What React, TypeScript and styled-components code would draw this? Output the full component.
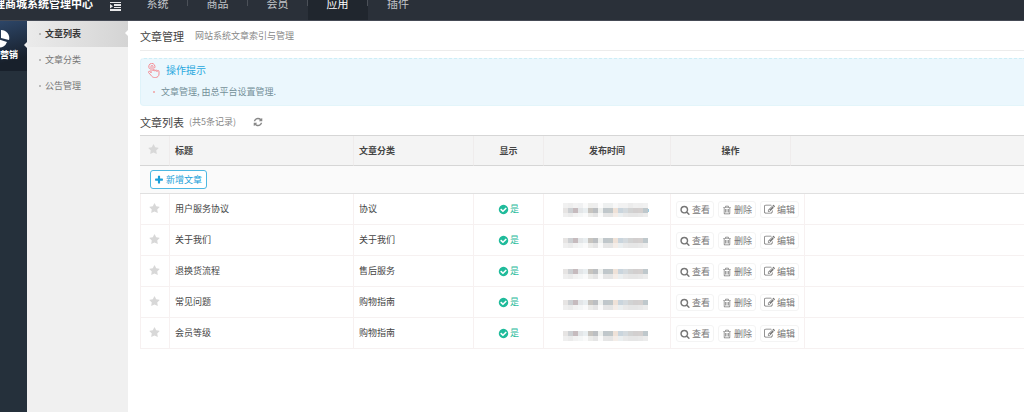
import React from "react";
import styled, { createGlobalStyle } from "styled-components";

const GlobalStyle = createGlobalStyle`
  * { box-sizing: border-box; }
  body {
    margin: 0;
    background: #fff;
    color: #444;
    font: 9px/14px "Noto Sans CJK SC", sans-serif;
  }
  button { font: inherit; cursor: pointer; }
  a { color: inherit; text-decoration: none; }
  h1, h2, h3, p, ul { margin: 0; padding: 0; font-weight: 400; list-style: none; }
`;

const paths = {
  search:
    "M1216 832q0-185-131.5-316.5t-316.5-131.5-316.5 131.5-131.5 316.5 131.5 316.5 316.5 131.5 316.5-131.5 131.5-316.5zm512 832q0 52-38 90t-90 38q-54 0-90-38l-343-342q-179 124-399 124-143 0-273.5-55.5t-225-150-150-225-55.5-273.5 55.5-273.5 150-225 225-150 273.5-55.5 273.5 55.5 225 150 150 225 55.5 273.5q0 220-124 399l343 343q37 37 37 90z",
  trash:
    "M704 736v576q0 14-9 23t-23 9h-64q-14 0-23-9t-9-23v-576q0-14 9-23t23-9h64q14 0 23 9t9 23zm256 0v576q0 14-9 23t-23 9h-64q-14 0-23-9t-9-23v-576q0-14 9-23t23-9h64q14 0 23 9t9 23zm256 0v576q0 14-9 23t-23 9h-64q-14 0-23-9t-9-23v-576q0-14 9-23t23-9h64q14 0 23 9t9 23zm128 724v-948h-896v948q0 22 7 40.5t14.5 27 10.5 8.5h832q3 0 10.5-8.5t14.5-27 7-40.5zm-672-1076h448l-48-117q-7-9-17-11h-317q-10 2-17 11zm928 32v64q0 14-9 23t-23 9h-96v948q0 83-47 143.5t-113 60.5h-832q-66 0-113-58.5t-47-141.5v-952h-96q-14 0-23-9t-9-23v-64q0-14 9-23t23-9h309l70-167q15-37 54-63t79-26h320q40 0 79 26t54 63l70 167h309q14 0 23 9t9 23z",
  edit:
    "M888 1184l116-116-152-152-116 116v56h96v96h56zm440-720q-16-16-33 1l-350 350q-17 17-1 33t33-1l350-350q17-17 1-33zm80 594v190q0 119-84.5 203.5t-203.5 84.5h-832q-119 0-203.5-84.5t-84.5-203.5v-832q0-119 84.5-203.5t203.5-84.5h832q63 0 117 25 15 7 18 23 3 17-9 29l-49 49q-14 14-32 8-23-6-45-6h-832q-66 0-113 47t-47 113v832q0 66 47 113t113 47h832q66 0 113-47t47-113v-126q0-13 9-22l64-64q15-15 35-7t20 29zm-96-738l288 288-672 672h-288v-288zm444 132l-92 92-288-288 92-92q28-28 68-28t68 28l152 152q28 28 28 68t-28 68z",
  check:
    "M1412 734q0-28-18-46l-91-90q-19-19-45-19t-45 19l-408 407-226-226q-19-19-45-19t-45 19l-91 90q-18 18-18 46 0 27 18 45l362 362q19 19 45 19 27 0 46-19l543-543q18-18 18-45zm252 162q0 209-103 385.5t-279.5 279.5-385.5 103-385.5-103-279.5-279.5-103-385.5 103-385.5 279.5-279.5 385.5-103 385.5 103 279.5 279.5 103 385.5z",
  refresh:
    "M1639 1056q0 5-1 7-64 268-268 434.5t-478 166.5q-146 0-282.5-55t-243.5-157l-129 129q-19 19-45 19t-45-19-19-45v-448q0-26 19-45t45-19h448q26 0 45 19t19 45-19 45l-137 137q71 66 161 102t187 36q134 0 250-65t186-179q11-17 53-117 8-23 30-23h192q13 0 22.5 9.5t9.5 22.5zm25-800v448q0 26-19 45t-45 19h-448q-26 0-45-19t-19-45 19-45l138-138q-148-137-349-137-134 0-250 65t-186 179q-11 17-53 117-8 23-30 23h-199q-13 0-22.5-9.5t-9.5-22.5v-7q65-268 270-434.5t480-166.5q146 0 284 55.5t245 156.5l130-129q19-19 45-19t45 19 19 45z",
  plus:
    "M1600 736v192q0 40-28 68t-68 28h-416v416q0 40-28 68t-68 28h-192q-40 0-68-28t-28-68v-416h-416q-40 0-68-28t-28-68v-192q0-40 28-68t68-28h416v-416q0-40 28-68t68-28h192q40 0 68 28t28 68v416h416q40 0 68 28t28 68z",
  star:
    "M1728 647q0 22-26 48l-363 354 86 500q1 7 1 20 0 21-10.5 35.5t-30.5 14.5q-19 0-40-12l-449-236-449 236q-22 12-40 12-21 0-31.5-14.5t-10.5-35.5q0-6 2-20l86-500-364-354q-25-27-25-48 0-37 56-46l502-73 225-455q19-41 49-41t49 41l225 455 502 73q56 9 56 46z",
};

const Glyph = styled.svg<{ $size: number }>`
  width: ${(p) => p.$size}px;
  height: ${(p) => p.$size}px;
  flex: none;
  display: block;
  fill: currentColor;
`;

function Icon({ name, size = 10 }: { name: keyof typeof paths; size?: number }) {
  return (
    <Glyph $size={size} viewBox="0 0 1792 1792" aria-hidden="true">
      <path d={paths[name]} />
    </Glyph>
  );
}

/* ---------- top bar ---------- */

const TopBar = styled.header`
  display: flex;
  align-items: flex-start;
  height: 21px;
  background: #2a3039;
  border-bottom: 1px solid #454a55;
  overflow: hidden;
`;

const Brand = styled.div`
  display: flex;
  justify-content: flex-end;
  width: 93px;
  flex: none;
  color: #fff;
  font-size: 11px;
  font-weight: 700;
  line-height: 6px;
  white-space: nowrap;
`;

const FoldButton = styled.button`
  width: 35px;
  height: 12px;
  padding: 0 0 0 17px;
  border: 0;
  background: none;
  flex: none;
  text-align: left;
`;

const TopNav = styled.nav`
  display: flex;
`;

const TopLink = styled.a<{ $active?: boolean }>`
  width: 60px;
  height: 20px;
  font-size: 11px;
  line-height: 6px;
  text-align: center;
  color: ${(p) => (p.$active ? "#fff" : "#c3c6ca")};
  background: ${(p) => (p.$active ? "#20262e" : "transparent")};
  &::after {
    content: "";
    float: right;
    width: 1px;
    height: 6px;
    background: #4b5058;
  }
  &:last-child::after { display: none; }
`;

/* ---------- left side ---------- */

const Shell = styled.div`
  display: flex;
  min-height: calc(100vh - 21px);
`;

const Rail = styled.nav`
  width: 27px;
  flex: none;
  background: #25303b;
  overflow: hidden;
`;

const RailLink = styled.a`
  display: flex;
  flex-direction: column;
  align-items: flex-end;
  height: 50px;
  padding: 8px 9px 0 0;
  position: relative;
  color: #fff;
  font-weight: 700;
  line-height: 12px;
  white-space: nowrap;
  background: linear-gradient(165deg, #2d4668, #18202b 75%);
`;

const Notch = styled.i<{ $top: number; $color: string }>`
  position: absolute;
  right: 0;
  top: ${(p) => p.$top}px;
  border: 3px solid transparent;
  border-left: 0;
  border-right-color: ${(p) => p.$color};
`;

const PieIcon = styled.svg`
  width: 20px;
  height: 20px;
  margin-right: 8px;
  fill: #fff;
`;

const SideMenu = styled.nav`
  width: 101px;
  flex: none;
  background: #f0f0f0;
`;

const SideLink = styled.a<{ $active?: boolean }>`
  display: flex;
  align-items: center;
  gap: 4px;
  height: 26px;
  padding-left: 12px;
  position: relative;
  color: ${(p) => (p.$active ? "#333" : "#777")};
  font-weight: ${(p) => (p.$active ? 700 : 400)};
  background: ${(p) => (p.$active ? "linear-gradient(90deg, #ebebeb, #d4d4d4)" : "none")};
`;

const Dot = styled.span<{ $color?: string }>`
  width: 2px;
  height: 2px;
  flex: none;
  border-radius: 1px;
  background: ${(p) => p.$color ?? "#aaa"};
`;

/* ---------- main area ---------- */

const Main = styled.main`
  flex: 1;
  min-width: 0;
  padding-left: 12px;
`;

const PageHead = styled.div`
  display: flex;
  align-items: center;
  gap: 11px;
  height: 30px;
  border-bottom: 1px solid #ececec;
  color: #888;
`;

const Title = styled.h1`
  font-size: 11px;
  line-height: 16px;
  color: #444;
`;

const Hint = styled.section`
  margin-top: 7px;
  height: 48px;
  padding: 3px 6px;
  background: #ebf7fd;
  border-top: 1px dashed #cdeef7;
  border-left: 1px solid #dff3fa;
  border-bottom: 1px solid #e3f5fa;
  border-radius: 4px 0 0 4px;
`;

const HintTitle = styled.h2`
  display: flex;
  align-items: center;
  gap: 6px;
  height: 16px;
  font-size: 10px;
  color: #28a7dd;
`;

const HintItem = styled.li`
  display: flex;
  align-items: center;
  gap: 6px;
  margin-top: 7px;
  padding-left: 6px;
  color: #749099;
`;

const ListHead = styled.div`
  display: flex;
  align-items: center;
  height: 29px;
  padding-top: 3px;
  color: #888;
`;

const Count = styled.span`
  margin-left: 5px;
`;

const RefreshButton = styled.button`
  display: flex;
  margin-left: 17px;
  padding: 0;
  border: 0;
  background: none;
  color: #888;
`;

const Table = styled.table`
  width: 100%;
  table-layout: fixed;
  border-collapse: separate;
  border-spacing: 0;
  border-top: 1px solid #d6d6d6;
`;

const Col = styled.col<{ $width?: number }>`
  width: ${(p) => (p.$width ? `${p.$width}px` : "auto")};
`;

const Th = styled.th<{ $center?: boolean }>`
  height: 30px;
  padding: 0 0 0 ${(p) => (p.$center ? 0 : 5)}px;
  text-align: ${(p) => (p.$center ? "center" : "left")};
  background: #f4f4f4;
  border-right: 1px solid #efecec;
  border-bottom: 1px solid #d6d6d6;
  &:last-child { border-right: 0; }
`;

const ToolCell = styled.td`
  height: 28px;
  padding: 0 10px;
  background: #fafafa;
  border-bottom: 1px solid #e0e0e0;
`;

const AddButton = styled.button`
  display: flex;
  align-items: center;
  gap: 2px;
  height: 19px;
  padding: 0 4px 0 3px;
  border: 1px solid #4db8e2;
  border-radius: 3px;
  background: #fff;
  color: #1a9fd9;
`;

const Td = styled.td<{ $center?: boolean }>`
  height: 31px;
  padding: 0 0 0 ${(p) => (p.$center ? 0 : 5)}px;
  text-align: ${(p) => (p.$center ? "center" : "left")};
  border-right: 1px solid #f7f1f1;
  border-bottom: 1px solid #f6f1f1;
  &:first-child { border-left: 1px solid #f7f1f1; }
  &:last-child { border-right: 0; }
`;

const Star = styled.button`
  display: block;
  margin: 0 auto;
  padding: 0 2px 2px 0;
  border: 0;
  background: none;
  color: #d8d8d8;
`;

const Status = styled.span`
  display: flex;
  align-items: center;
  justify-content: center;
  gap: 1px;
  color: #1fbb9b;
`;

const Actions = styled.div`
  display: flex;
  gap: 4px;
  padding-top: 1px;
`;

const ActionButton = styled.button`
  display: flex;
  align-items: center;
  gap: 2px;
  height: 17px;
  padding: 0 3px;
  border: 1px solid #f4f4f4;
  border-radius: 3px;
  background: #fff;
  color: #777;
`;

const Mosaic = styled.svg`
  display: block;
  width: 86px;
  height: 16px;
  margin: 0 auto 0 19px;
`;

const topRow = ["#f1f1f1", "#eeeeee", "#f3f3f3", "#f0f1f2", "#fafafa", "#eeeeec", "#eeeeee", "#fcfcfc", "#eef0f0", "#eef0f0", "#f8f8f8", "#f2f2f2", "#f2f2f2", "#ececec", "#f0f0f0", "#efefef", "#f1f1f1"];
const midRow = ["#e6e4e3", "#cdd0d3", "#c6bbbe", "#e3e6e8", "#e9eef0", "#c8c5c0", "#bcbfc2", "#eef0ee", "#c0c7cb", "#c1c8ca", "#efe2d8", "#cad5dd", "#d4dade", "#d2d3d3", "#d2cfcf", "#d4d0cf", "#bfc8cc"];
const lowRow = ["#efefef", "#ebebeb", "#f2f2f2", "#f4f6f6", "#fafafa", "#ececea", "#e5e5e5", "#fafafa", "#e6e6e6", "#e5e5e5", "#f4ede8", "#ebeff0", "#e9e9e9", "#e6e6e6", "#e6e6e6", "#e8e8e8", "#ececec"];

function MaskedTime({ first }: { first: boolean }) {
  return (
    <Mosaic viewBox="0 0 86 16" shapeRendering="crispEdges" aria-label="发布时间">
      {midRow.map((c, i) => (
        <g key={i}>
          {first && <rect x={i * 5} y="2" width="5" height="5" fill={topRow[i]} />}
          <rect x={i * 5} y={first ? 7 : 6} width="5" height="5" fill={c} />
          <rect x={i * 5} y={first ? 12 : 11} width="5" height={first ? 4 : 5} fill={lowRow[i]} />
        </g>
      ))}
      {first && <rect x="85" y="8" width="1" height="3" fill="#9ccbe0" />}
    </Mosaic>
  );
}

const articles = [
  { title: "用户服务协议", category: "协议" },
  { title: "关于我们", category: "关于我们" },
  { title: "退换货流程", category: "售后服务" },
  { title: "常见问题", category: "购物指南" },
  { title: "会员等级", category: "购物指南" },
];

export default function App() {
  return (
    <>
      <GlobalStyle />
      <TopBar>
        <Brand>理商城系统管理中心</Brand>
        <FoldButton aria-label="折叠菜单">
          <svg width="11" height="11" viewBox="0 0 11 11" fill="#e8e8ea" display="block">
            <path d="M0 1h11v1H0zM4 3h7v2H4zM4 6h7v1H4zM0 8h11v2H0zM0 3l3 2.200-3 2.200z" />
          </svg>
        </FoldButton>
        <TopNav>
          <TopLink href="#">系统</TopLink>
          <TopLink href="#">商品</TopLink>
          <TopLink href="#">会员</TopLink>
          <TopLink href="#" $active>应用</TopLink>
          <TopLink href="#">插件</TopLink>
        </TopNav>
      </TopBar>
      <Shell>
        <Rail>
          <RailLink href="#">
            <PieIcon viewBox="0 0 20 20" aria-hidden="true">
              <path d="M9 2.500A8 8 0 1 0 17 13L9 10.500z" />
              <path d="M11 1a8 8 0 0 1 8 10l-8-2z" />
            </PieIcon>
            营销
            <Notch $top={21} $color="#f0f0f0" />
          </RailLink>
        </Rail>
        <SideMenu>
          <SideLink href="#" $active>
            <Dot />文章列表
            <Notch $top={9} $color="#fff" />
          </SideLink>
          <SideLink href="#"><Dot />文章分类</SideLink>
          <SideLink href="#"><Dot />公告管理</SideLink>
        </SideMenu>
        <Main>
          <PageHead>
            <Title>文章管理</Title>
            <p>网站系统文章索引与管理</p>
          </PageHead>
          <Hint>
            <HintTitle>
              <svg width="13" height="15" viewBox="0 0 13 15" fill="none" stroke="#f58b93" strokeLinecap="round" strokeLinejoin="round">
                <path d="M4 9.600V3.500a1 1 0 0 1 2 0V7.500M6 7.500a1 1 0 0 1 2 0.300M8 7.800a1 1 0 0 1 2 0.500M10 8.300a1 1 0 0 1 2 0.400V11c0 2-1.500 3.500-3.500 3.500H7.500c-1.500 0-2.500-.8-3.500-2.200L1.500 9.500c-.4-1 .7-1.700 1.500-.9L4 9.600" />
                <path d="M2.300 5.500A3.200 3.200 0 1 1 7.800 4.800" />
              </svg>
              操作提示
            </HintTitle>
            <ul>
              <HintItem><Dot $color="#f0a0a0" />文章管理, 由总平台设置管理.</HintItem>
            </ul>
          </Hint>
          <ListHead>
            <Title as="h3">文章列表</Title>
            <Count>(共5条记录)</Count>
            <RefreshButton aria-label="刷新"><Icon name="refresh" /></RefreshButton>
          </ListHead>
          <Table>
            <colgroup>
              <Col $width={30} />
              <Col $width={184} />
              <Col $width={120} />
              <Col $width={70} />
              <Col $width={127} />
              <Col $width={120} />
              <Col $width={14} />
              <Col />
            </colgroup>
            <thead>
              <tr>
                <Th $center><Star aria-label="全选"><Icon name="star" size={11} /></Star></Th>
                <Th>标题</Th>
                <Th>文章分类</Th>
                <Th $center>显示</Th>
                <Th $center>发布时间</Th>
                <Th $center>操作</Th>
                <Th colSpan={2} />
              </tr>
            </thead>
            <tbody>
              <tr>
                <ToolCell colSpan={8}>
                  <AddButton><Icon name="plus" />新增文章</AddButton>
                </ToolCell>
              </tr>
              {articles.map((a, i) => (
                <tr key={a.title}>
                  <Td $center><Star aria-label="选择"><Icon name="star" size={11} /></Star></Td>
                  <Td>{a.title}</Td>
                  <Td>{a.category}</Td>
                  <Td $center><Status><Icon name="check" size={11} />是</Status></Td>
                  <Td $center><MaskedTime first={i === 0} /></Td>
                  <Td colSpan={2}>
                    <Actions>
                      <ActionButton><Icon name="search" />查看</ActionButton>
                      <ActionButton><Icon name="trash" />删除</ActionButton>
                      <ActionButton><Icon name="edit" size={11} />编辑</ActionButton>
                    </Actions>
                  </Td>
                  <Td />
                </tr>
              ))}
            </tbody>
          </Table>
        </Main>
      </Shell>
    </>
  );
}
